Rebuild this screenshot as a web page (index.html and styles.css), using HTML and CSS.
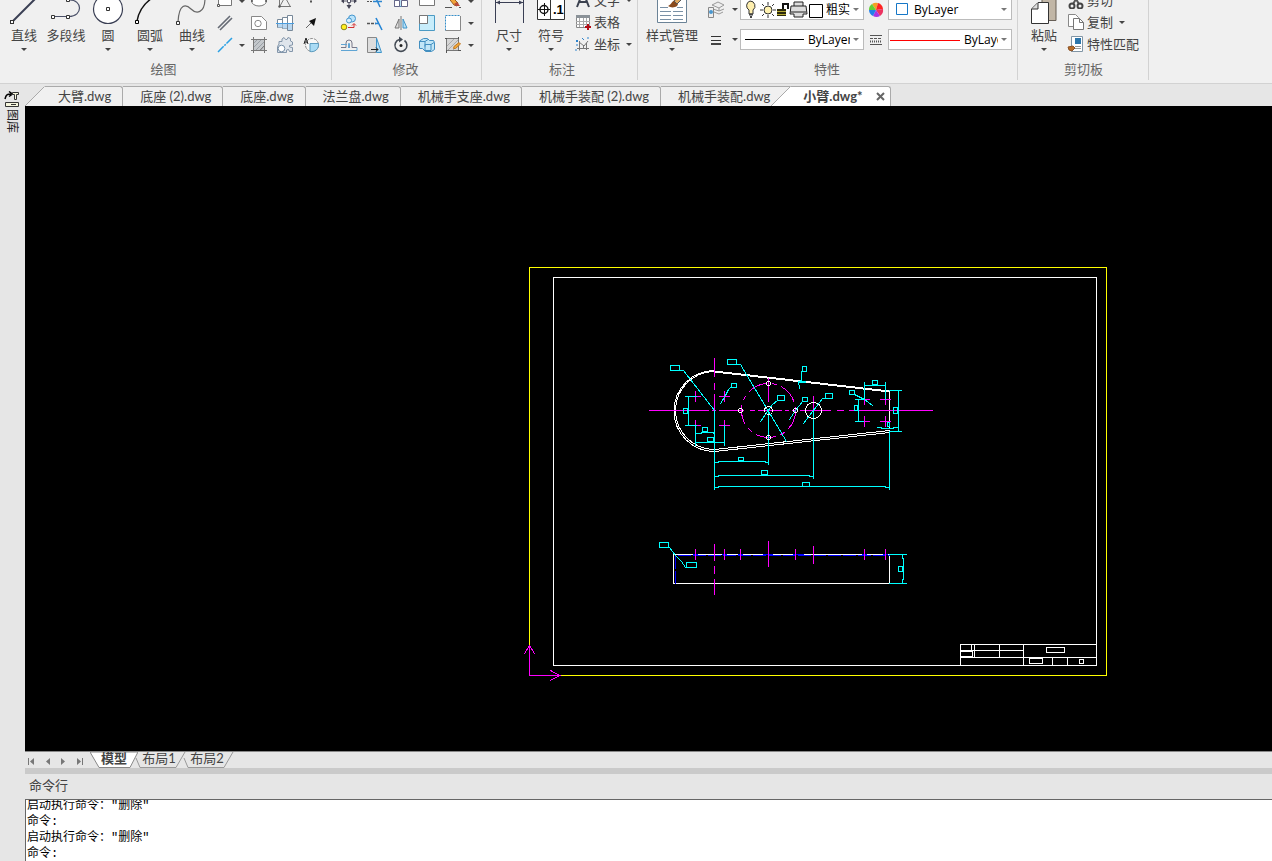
FILE: index.html
```html
<!DOCTYPE html>
<html lang="zh-CN">
<head>
<meta charset="utf-8">
<title>小臂.dwg</title>
<link rel="stylesheet" href="styles.css">
</head>
<body>
<header class="ribbon">
  <section class="panel draw-panel">
    <div class="panel-body">
      <button class="tool"><svg class="tool-icon" width="36" height="26"><path d="M6 22L29-1" stroke="#3a3f54" stroke-width="2"/><rect x="4.500" y="20.500" width="3" height="3" fill="#fff" stroke="#333"/></svg>直线<i class="caret"></i></button>
      <button class="tool"><svg class="tool-icon" width="36" height="26"><path d="M5 16.500h16c14 0 14-17 0-16.500" fill="none" stroke="#4a5068" stroke-width="1.200"/><g fill="#fff" stroke="#333"><path d="M3.500 15.500h3v3h-3zM18.500 15.500h3v3h-3zM18.500-1.500h3v3h-3z"/></g></svg>多段线</button>
      <button class="tool"><svg class="tool-icon" width="36" height="26"><circle cx="18" cy="9" r="14.500" fill="#fff" stroke="#3a3f54" stroke-width="1.200"/><path d="M16.500 7.500h3v3h-3z" fill="#fff" stroke="#333"/></svg>圆<i class="caret"></i></button>
      <button class="tool"><svg class="tool-icon" width="36" height="26"><path d="M5 21Q8 5 22-3" fill="none" stroke="#111" stroke-width="1.400"/><path d="M3.500 20.500h3v3h-3z" fill="#fff" stroke="#000"/></svg>圆弧<i class="caret"></i></button>
      <button class="tool"><svg class="tool-icon" width="36" height="26"><path d="M4 22C5 3 12 4 17 9S31 14 31-2" fill="none" stroke="#666" stroke-width="1.200"/><path d="M2.500 21.500h3v3h-3z" fill="#fff" stroke="#333"/></svg>曲线<i class="caret"></i></button>
      <div class="mini draw-mini">
        <button aria-label="矩形"><svg width="18" height="18"><path d="M2.500-2h13v15.500h-13z" fill="#fff" stroke="#777"/><path d="M1.500 12.500h2v2h-2z" fill="#fff" stroke="#555"/></svg></button><i class="caret"></i>
        <button aria-label="椭圆"><svg width="18" height="18"><ellipse cx="9" cy="9" rx="7.500" ry="5" fill="#fff" stroke="#777"/><circle cx="2" cy="9" r="1" fill="#555"/><circle cx="16" cy="9" r="1" fill="#555"/></svg></button>
        <button aria-label="折线"><svg width="18" height="18"><path d="M3.500 3v11.500H15M4 14L9 5l5 9" fill="none" stroke="#777"/><circle cx="3.500" cy="14.500" r="1.200" fill="#555"/></svg></button>
        <button aria-label="点"><svg width="18" height="18"><path d="M9 5v6M8 9.500h2" stroke="#555"/></svg></button>
        <button aria-label="平行线"><svg width="18" height="18"><path d="M2 14L14 2M4 16L16 4" stroke="#666b75" stroke-width="1.600"/></svg></button><i></i>
        <button aria-label="孔"><svg width="18" height="18"><path d="M1.500 2.500h10l5 5v8h-15z" fill="#fff" stroke="#888"/><circle cx="8" cy="9.500" r="3.200" fill="#fff" stroke="#888"/></svg></button>
        <button aria-label="轴"><svg width="18" height="18"><path d="M1.500 5.500h5v8h-5zM6.500 3.500h5v11h-5zM11.500 1.500h5v15h-5z" fill="#fff" stroke="#789"/><path d="M2 9.500h4.500v4H2zM7 9.500h4v5H7zM12 9.500h4v6.500h-4z" fill="#b8d7f1"/><path d="M0 9.500h18" stroke="#4a9ee0"/></svg></button>
        <button aria-label="箭头"><svg width="18" height="18"><path d="M4 14l5-5" stroke="#666"/><path d="M14 4l-2 8-5-5z" fill="#111"/></svg></button>
        <button aria-label="中心线"><svg width="18" height="18"><path d="M2 16L16 2" stroke="#2aa0e4" stroke-width="1.500" stroke-dasharray="8 1 2 1"/></svg></button><i class="caret"></i>
        <button aria-label="剖面线"><svg width="18" height="18"><path d="M3 3h12v12H3z" fill="#c4c8cc"/><path d="M3 12l9-9M3 8l5-5M5 15L15 5M9 15l6-6" stroke="#9aa0a6"/><path d="M3.500 1v16M1 3.500h16M1 14.500h16M14.500 1v16M10 14.500l4.500-5" stroke="#777" fill="none"/></svg></button>
        <button aria-label="齿轮"><svg width="18" height="18"><path d="M3 8V5.500h3V3L8 1.500l1.500 2H11L12 1.500l2.500 1v2.500l2 1v3l-3 .5v1.500l3 .5v4h-3l-1-2-2 .5V16.500H1.500v-6z" fill="#dfe5ec" stroke="#8496aa"/><circle cx="5.500" cy="12.500" r="3.300" fill="#fff" stroke="#7890a8"/></svg></button>
        <button aria-label="局部放大"><svg width="18" height="18"><circle cx="10" cy="9" r="6.500" fill="#f8f8f8" stroke="#888" stroke-dasharray="3 1"/><path d="M8 7.500h8.500a7 7 0 0 1-8.500 8z" fill="#a9dbf5" stroke="#5c9cc0"/><path d="M2 8l2-6 2 6M2.500 6h3" fill="none" stroke="#222"/></svg></button>
      </div>
    </div>
    <h2 class="panel-name">绘图</h2>
  </section>

  <section class="panel modify-panel">
    <div class="panel-body">
      <div class="mini modify-mini">
        <button aria-label="移动"><svg width="18" height="18"><path d="M9 3v12M3 9h12" stroke="#556"/><path d="M9 17l-2.500-4h5zM1 9l3-2.500v5zM17 9l-3-2.500v5z" fill="#445"/><path d="M7.500 7.500h3v3h-3z" fill="#fff" stroke="#556"/></svg></button>
        <button aria-label="修剪"><svg width="18" height="18"><path d="M1 9.500h8" stroke="#555" stroke-dasharray="2 1"/><path d="M7 9.500h9M9 4l5 11" stroke="#2d86d0" stroke-width="1.500"/></svg></button>
        <button aria-label="阵列"><svg width="18" height="18"><path d="M2.500 1.500h12v13h-12z" fill="#bde2f6" stroke="#4b93bd"/><path d="M9.500 8.500h6v6h-6zM2.500 8.500h5v6h-5z" fill="#fff" stroke="#668"/></svg></button>
        <button aria-label="拉伸"><svg width="18" height="18"><path d="M1.500-2h15v15.500h-15z" fill="#fff" stroke="#777"/></svg></button>
        <button aria-label="删除"><svg width="18" height="18"><path d="M3 4l2-2 9 9-1 3-3-1z" fill="#f2a53a" stroke="#986021"/><path d="M10 12l3-2 3 4h-4z" fill="#b94b3e"/><path d="M1 15.500h7M15 15.500h2" stroke="#555"/></svg></button><i class="caret"></i>
        <button aria-label="复制对象"><svg width="18" height="18"><circle cx="12" cy="4.500" r="3.500" fill="#bce4fa" stroke="#4496cf"/><circle cx="9" cy="6.500" r="2.500" fill="#d9effb" stroke="#4496cf"/><circle cx="4" cy="13" r="2.800" fill="#ffee20" stroke="#8a8520"/><path d="M8 13.500h6V10M12 11.500l2-2 2 2" fill="none" stroke="#d33232"/></svg></button>
        <button aria-label="延伸"><svg width="18" height="18"><path d="M1 9.500h9" stroke="#555" stroke-width="1.400" stroke-dasharray="3 1"/><path d="M9 9.500h4M10 4l6 12" stroke="#2585d4" stroke-width="1.600"/></svg></button>
        <button aria-label="镜像"><svg width="18" height="18"><path d="M7 5v9H3z" fill="#ddd" stroke="#777"/><path d="M11 5v9h4z" fill="#b8e0f7" stroke="#3f94c9"/><path d="M9 2v14" stroke="#777"/></svg></button>
        <button aria-label="缩放"><svg width="18" height="18"><path d="M1.500 1.500h15v15h-15z" fill="#c8edfb" stroke="#4b9ac4"/><path d="M1.500 1.500h8v8h-8z" fill="#fff" stroke="#777"/></svg></button>
        <button aria-label="框选"><svg width="18" height="18"><path d="M2 2h14v14H2z" fill="#fff"/><path d="M1.500 16.500v-15h15" fill="none" stroke="#348fcb" stroke-dasharray="2 1"/><path d="M16.500 2v14.500h-15" fill="none" stroke="#888"/></svg></button><i class="caret"></i>
        <button aria-label="偏移"><svg width="18" height="18"><path d="M1 11.500h5V7a3 3 0 0 1 6 0v4.500h5" fill="none" stroke="#778"/><path d="M1 14.500h16v-3M1 8.500h6" fill="none" stroke="#60a5d4"/><path d="M8.500 12V7.500h1V12" fill="none" stroke="#60a5d4"/></svg></button>
        <button aria-label="斜切"><svg width="18" height="18"><path d="M1.500 1.500h9v15h-9z" fill="#ddd" stroke="#888"/><path d="M10.500 2l5 14.500h-5z" fill="#b8e0f7" stroke="#3f94c9"/><path d="M5 13.500h7M10 11.500l2 2-2 2" fill="none" stroke="#222"/></svg></button>
        <button aria-label="旋转"><svg width="18" height="18"><path d="M12.500 4.500a6 6 0 1 1-5-1" fill="none" stroke="#444b55" stroke-width="1.600"/><path d="M7 .5l4 3-4 3z" fill="#444b55"/><circle cx="9" cy="9.500" r="1.500" fill="#222"/></svg></button>
        <button aria-label="块编辑"><svg width="18" height="18"><path d="M1.500 5l4-2.500h4l2 2h4l1 2v7l-3 2h-6l-3-3h-3z" fill="#c1e6f7" stroke="#438fc0"/><path d="M2 5.500h5v5M7 8.500h6v6H7zM13 8.500l3-2M7 5.500l3-2" fill="none" stroke="#438fc0"/></svg></button>
        <button aria-label="编辑填充"><svg width="18" height="18"><path d="M2.500 2.500h12v12h-12z" fill="#d6d6d6" stroke="#777"/><path d="M3 10l7-7M4 14L14 4M9 14l5-5" stroke="#aaa"/><path d="M1 2.500h2M14 14.500h3M2.500 14v3M14.500 1v2" stroke="#555"/><path d="M9.500 12.500l.5-2 5-4 1.500 1.500-5 4.500z" fill="#f1a638" stroke="#c07a28"/></svg></button><i class="caret"></i>
      </div>
    </div>
    <h2 class="panel-name">修改</h2>
  </section>

  <section class="panel annotate-panel">
    <div class="panel-body">
      <button class="tool"><svg class="tool-icon" width="36" height="26"><path d="M4.500-2v25M32.500-2v25M5 2.500h27" stroke="#3a3f54"/><path d="M5 2.500L9 .5v4zM32 2.500L28 .5v4z" fill="#3a3f54"/></svg>尺寸<i class="caret"></i></button>
      <button class="tool"><svg class="tool-icon" width="36" height="26"><path d="M4.500-2h27v21.500h-27zM17.500-2v21" fill="#fff" stroke="#333"/><circle cx="11" cy="9.500" r="4" fill="none" stroke="#111" stroke-width="1.400"/><path d="M5 9.500h12M11.500 3v13" stroke="#111"/><text class="symbol-text" x="20" y="14">.1</text></svg>符号<i class="caret"></i></button>
      <div class="text-tools">
        <button><svg width="18" height="18"><path d="M3 16L8.500 2h1L15 16M5 11h8" fill="none" stroke="#3c4250" stroke-width="2"/></svg>文字<i class="caret"></i></button>
        <button><svg width="18" height="18"><path d="M2.500 2.500h13v12h-13z" fill="#fff" stroke="#888"/><path d="M2 2h14v3H2z" fill="#8b9298"/><path d="M2 8.500h14M2 11.500h14M5.500 5v9M9.500 5v9M12.500 5v9" stroke="#aaa"/><path d="M11 14h6M14 11v6" stroke="#b40d16" stroke-width="2"/></svg>表格</button>
        <button><svg width="18" height="18"><path d="M5.500 6v9.500M3 13.500h12M5 7l5 4 4-5M9.500 10v4M12.500 8v7" fill="none" stroke="#777"/><path d="M2 5l2 2M4 5l-2 2M3 9v2M2 16v-2M8 3l2 2M14 2v2" stroke="#2d83cd"/></svg>坐标<i class="caret"></i></button>
      </div>
    </div>
    <h2 class="panel-name">标注</h2>
  </section>

  <section class="panel">
    <div class="panel-body">
      <button class="tool tool-wide"><svg class="tool-icon" width="36" height="26"><path d="M3.500-2h29v24.500h-29z" fill="#fff" stroke="#6b8397"/><path d="M6 7.500h8M6 11.500h11M19 11.500h10M6 15.500h11M19 15.500h10M6 19.500h11M19 19.500h10M23 7.500h6" stroke="#7990a5"/><path d="M14 6c3-1 4-5 7-6 4 1 4 6 0 7-3 1-5 0-7-1z" fill="#8a4a1c"/><path d="M20 1L26-4l3 2-6 6z" fill="#dfa75e" stroke="#555"/></svg>样式管理<i class="caret"></i></button>
      <div class="properties">
        <button aria-label="图层"><svg width="18" height="18"><path d="M5 4l6-3 6 3-5 3zM6 8l6 2 5-2M7 11l5 2 4-2M12 7v3" fill="#eee" stroke="#999"/><path d="M1.500 6.500h5v10h-5z" fill="#eee" stroke="#888"/><circle cx="4" cy="11" r="2" fill="#4a97cf"/></svg></button><i class="caret"></i>
        <div class="combo">
          <svg class="layer-state" width="68" height="20"><path d="M9 1a5 5 0 0 1 3 9v4H8v-4a5 5 0 0 1 1-9z" fill="#ffefae" stroke="#333"/><path d="M8 14.500h4M9 17h2" stroke="#444" stroke-width="2"/><circle cx="27" cy="10" r="4" fill="#fff2b1" stroke="#333"/><path d="M27 2v3M27 15v3M19 10h3M32 10h3M21 4l2 2M31 14l2 2M33 4l-2 2M23 14l-2 2" stroke="#333"/><path d="M36 9h9v7h-9z" fill="#2c2a0b"/><path d="M36 11.500h9M36 14.500h9" stroke="#b5a934"/><path d="M42 9V4h5v5" fill="none" stroke="#111" stroke-width="2"/><path d="M53 6V2h9v4h3l1 8h-4v3h-9v-3h-4l1-8z" fill="#ddd" stroke="#222"/><path d="M53 6h9M50 12h15" stroke="#222"/></svg>
          <svg class="swatch" width="17" height="20"><path d="M.5 4.500h13v13H.5z" fill="#fff" stroke="#000"/></svg>
          <select aria-label="图层选择"><option>粗实线</option></select><i class="caret"></i>
        </div>
        <svg width="18" height="18"><circle cx="9" cy="9" r="7" fill="#eee"/><path d="M9 9L5 3A7 7 0 0 1 11 2z" fill="#f4a124"/><path d="M9 9l2-7a7 7 0 0 1 5 6z" fill="#ff2320"/><path d="M9 9l7-1a7 7 0 0 1-3 7z" fill="#ec3260"/><path d="M9 9l4 6a7 7 0 0 1-7 0z" fill="#a835e2"/><path d="M9 9l-3 6a7 7 0 0 1-4-6z" fill="#2180ea"/><path d="M9 9H2a7 7 0 0 1 3-6z" fill="#63cf35"/></svg>
        <div class="combo"><svg width="25" height="20"><path d="M7.500 3.500h11v11h-11z" fill="#fff" stroke="#1677c7"/></svg><select aria-label="颜色"><option>ByLayer</option></select><i class="caret"></i></div>
        <button aria-label="线宽"><svg width="18" height="18"><path d="M4 5.500h10M4 9.500h10" stroke="#333"/><path d="M4 13h10" stroke="#444" stroke-width="2"/></svg></button><i class="caret"></i>
        <div class="combo"><svg width="67" height="20"><path d="M4 9.500h59" stroke="#000"/></svg><select aria-label="线型"><option>ByLayer</option></select><i class="caret"></i></div>
        <svg width="18" height="18"><path d="M3 4.500h12M3 13.500h12" stroke="#555"/><path d="M3 7.500h12" stroke="#555" stroke-dasharray="3 1"/><path d="M3 10.500h12" stroke="#555" stroke-width="2" stroke-dasharray="1 1"/></svg>
        <div class="combo"><svg width="75" height="20"><path d="M1 10.500h70" stroke="red"/></svg><select aria-label="线条"><option>ByLayer</option></select><i class="caret"></i></div>
      </div>
    </div>
    <h2 class="panel-name">特性</h2>
  </section>

  <section class="panel clipboard-panel">
    <div class="panel-body">
      <button class="tool"><svg class="tool-icon" width="36" height="26"><path d="M16-2h14v22.500H16z" fill="#c1b6a6" stroke="#665e55"/><path d="M5.500 9L12 2.500h10.500v21h-17z" fill="#fff" stroke="#333"/><path d="M6 9h6V3" fill="#ddd" stroke="#333"/></svg>粘贴<i class="caret"></i></button>
      <div class="text-tools clipboard-tools">
        <button><svg width="18" height="18"><path d="M4 0l8 13M14 0L6 13" stroke="#555" stroke-width="2"/><circle cx="5" cy="15" r="2.500" fill="none" stroke="#444" stroke-width="2"/><circle cx="13" cy="15" r="2.500" fill="none" stroke="#444" stroke-width="2"/></svg>剪切</button>
        <button><svg width="18" height="18"><path d="M1.500 1.500h7l3 3v9h-10z" fill="#fff" stroke="#888"/><path d="M6.500 5.500h6l4 4v7h-10z" fill="#fff" stroke="#777"/><path d="M12.500 5.500v4h4" fill="none" stroke="#777"/></svg>复制<i class="caret"></i></button>
        <button><svg width="18" height="18"><path d="M4.500 1.500h11v15h-11z" fill="#fff" stroke="#8095a5"/><path d="M8 3h6v6H8z" fill="#2d76ab"/><path d="M8 11.500h6M8 13.500h6" stroke="#999"/><path d="M1 12l5-1 2 2-3 3-3-1z" fill="#b86b25" stroke="#8c5428"/></svg>特性匹配</button>
      </div>
    </div>
    <h2 class="panel-name">剪切板</h2>
  </section>
</header>

<div class="workspace">
  <aside class="side">
    <button><svg width="18" height="18"><path d="M1 9c1-5 3-5 6-5M5 1.500L8.500 4 5 6.500" fill="none" stroke="#000" stroke-width="1.500"/><path d="M8.500 2.500h6v2h-2v5h-2v-5h-2zM1.500 12.500h13v4h-13zM7 14.500h5" fill="#f5f5dc" stroke="#333"/></svg><span>图库</span></button>
  </aside>
  <main class="main">
    <nav class="files">
      <svg class="slope" width="20" height="20"><path d="M0 20L19.500.5H20V20z" fill="#f0f0f0"/><path d="M0 20L19.500.5" stroke="#aaa"/></svg>
      <button class="file first">大臂.dwg</button><button class="file">底座 (2).dwg</button><button class="file">底座.dwg</button><button class="file">法兰盘.dwg</button><button class="file">机械手支座.dwg</button><button class="file">机械手装配 (2).dwg</button><button class="file last">机械手装配.dwg</button>
      <svg class="slope" width="20" height="20"><path d="M0 0h20L0 20z" fill="#f0f0f0"/><path d="M0 20L19.500.5H20V20z" fill="#fff"/><path d="M0 20L19.500.5H0" fill="none" stroke="#aaa"/></svg>
      <button class="file active">小臂.dwg*<svg width="9" height="9"><path d="M1 1l7 7M8 1L1 8" stroke="#666" stroke-width="2"/></svg></button>
    </nav>

    <div class="canvas">
      <svg viewBox="25 106 1247 645" preserveAspectRatio="xMinYMin meet" shape-rendering="crispEdges">
        <g transform="translate(.5 .5)" fill="none" stroke-width="1" stroke-linecap="square">
          <path class="yellow" d="M529 267H1106V675H529z"/>
          <path class="white" d="M553 277H1096V665H553z"/>
          <path class="magenta" d="M529 645V675H559M524 653L529 645L534 653M550 670L559 675L550 680"/>
          <!-- title block -->
          <path class="white" d="M960 665V644H1096M960 650H1023M960 657H1096M971 644V650M974 644V657M999 644V657M1023 644V665M1052 657V665M1067 657V665M960 651H972V656H960zM1046 647H1064V652H1046zM1029 658H1042V663H1029zM1079 659H1083V663H1079z"/>
          <!-- arm, top view -->
          <path class="white" d="M714 370A40 40 0 0 0 714 451L889 432M714 371A39 39 0 0 0 714 449L889 430M889 391V427"/>
          <path class="white" stroke-width="2" d="M714 371L889 391"/>
          <path class="magenta" d="M649 410H708M712 410H715M719 410H743M750 410H754M758 410H781M785 410H788M792 410H794M800 410H830M837 410H843M849 410H932M714 358V376M714 383V389M714 394V409M768 378V401M813 396V410"/>
          <path class="magenta" d="M690 396H700M695 391V401M719 396H729M724 391V401M690 425H700M695 420V430M719 425H729M724 420V430M859 399H869M864 394V404M880 399H890M885 394V404M859 421H869M864 416V426M880 421H890M885 416V426"/>
          <circle class="magenta" cx="768" cy="410" r="27" stroke-linecap="butt" stroke-dasharray="20 5 5 5"/>
          <g class="cyan">
            <path d="M670 365H679V370H670zM680 370H683L714 410V489M727 359H736V364H727zM737 364H740L786 441M731 383H736V387H731zM731 386L728 389L725 395L720 403M777 395H784V400H777zM777 400L772 404L760 421"/>
            <path d="M683 408H687V413H683zM685 396H696M685 425H696M688 396V425M695 425V445M724 425V445M695 433H700L702 432H712L714 433M702 427H707V431H702zM695 442H724M707 437H713V441H707z"/>
            <path d="M768 410V464M714 462H718V461H765V462H768M738 457H743V460H738zM813 410V478M714 476H718V475H809V476H813M761 470H767V474H761zM889 432V489M714 487H718V486H885V487H889M802 482H809V486H802z"/>
            <path d="M802 366H806V371H802zM801 371V380L798 381L799 388M802 397H807V401H802zM802 401L795 410L789 419M825 393H832V398H825zM825 398H822L803 423"/>
            <path d="M864 399V382M885 399V382M864 385H885M872 380H877V384H872zM849 390H854V394H849zM854 394L864 399L872 405M855 399H863M855 421H863M858 399V421M854 405H857V410H854zM889 390H901M889 431H901M898 390V431M893 407H897V413H893zM887 422H889V426H887zM877 427H881V428H893V427H898"/>
            <path stroke-width="2" d="M798 381H804"/>
          </g>
          <g class="white"><circle cx="740" cy="410" r="2"/><circle cx="768" cy="383" r="2"/><circle cx="768" cy="437" r="2"/><circle cx="795" cy="410" r="2"/><circle cx="768" cy="410" r="4"/><circle cx="813" cy="410" r="8"/></g>
          <!-- arm, side view -->
          <path class="white" d="M673 554H889V583H673z"/>
          <path class="blue" stroke-linecap="butt" stroke-dasharray="13 2" d="M675 583V555H889"/>
          <path class="blue" d="M693 554H697M722 554H726M738 554H742M763 554H772M793 554H803M862 554H866M883 554H887"/>
          <path class="magenta" d="M695 549V559M714 544V560M714 566V573M714 579V594M724 549V559M740 549V559M768 541V566M795 549V559M813 546V563M864 549V559M885 549V559"/>
          <path class="cyan" d="M659 542H668V547H659zM669 547L675 555L681 561L685 567H686M686 562H696V567H686zM889 554H906M889 583H906M902 554V558H903V579H902V583M898 566H902V571H898z"/>
        </g>
      </svg>
    </div>

    <nav class="layouts">
      <div class="pager">
        <button aria-label="第一个"><svg width="9" height="9"><path d="M1.500 1v7" stroke="#777"/><path d="M7 1v7L3 4.500z" fill="#777"/></svg></button>
        <button aria-label="上一个"><svg width="9" height="9"><path d="M7 1v7L3 4.500z" fill="#777"/></svg></button>
        <button aria-label="下一个"><svg width="9" height="9"><path d="M2 1v7l4-3.500z" fill="#777"/></svg></button>
        <button aria-label="最后一个"><svg width="9" height="9"><path d="M7.500 1v7" stroke="#777"/><path d="M2 1v7l4-3.500z" fill="#777"/></svg></button>
      </div>
      <button class="layout current"><svg width="48" height="17"><path d="M0 0l9 15.500h31L48 0z" fill="#fff" stroke="#888"/></svg><span>模型</span></button>
      <button class="layout"><svg width="54" height="17"><path d="M4 6l4 9.500h36L53 0" fill="none" stroke="#999"/></svg><span>布局1</span></button>
      <button class="layout"><svg width="54" height="17"><path d="M4 6l4 9.500h36L53 0" fill="none" stroke="#999"/></svg><span>布局2</span></button>
    </nav>
    <div class="splitter"></div>
    <section class="command">
      <h2 class="command-title">命令行</h2>
      <div class="log">
        <p>启动执行命令："删除"</p>
        <p>命令:</p>
        <p>启动执行命令："删除"</p>
        <p class="prompt"><label for="cmd">命令:</label><input id="cmd" type="text"></p>
      </div>
    </section>
  </main>
</div>
</body>
</html>
```
FILE: styles.css
```css
* { box-sizing: border-box; }
body {
  margin: 0;
  height: 100vh;
  display: flex;
  flex-direction: column;
  overflow: hidden;
  background: #e6e6e6;
  color: #444;
  font: 13px/18px Lato, "Noto Sans CJK SC", sans-serif;
}
button {
  border: 0;
  padding: 0;
  background: none;
  color: inherit;
  font: inherit;
  white-space: nowrap;
}
h2, p { margin: 0; font-weight: normal; }
h2 { font-size: 13px; }
svg { display: block; flex: none; }

.caret {
  width: 0;
  height: 0;
  border: solid transparent;
  border-width: 3px 3px 0;
  border-top-color: #444;
  place-self: center;
}

/* ribbon */
.ribbon {
  display: flex;
  flex: none;
  height: 84px;
  background: #f0f0f0;
  border-bottom: 1px solid #d2d2d2;
  overflow: hidden;
}
.panel {
  display: flex;
  flex-direction: column;
  flex: none;
  padding: 0 5px 0 4px;
  height: 80px;
  border-right: 1px solid #d2d2d2;
}
.draw-panel { padding: 0 7px 0 3px; }
.modify-panel { padding: 0 6px 0 4px; }
.annotate-panel { padding: 0 1px 0 6px; }
.clipboard-panel { padding: 0 4px 0 5px; }
.panel-body { display: flex; height: 60px; }
.panel-name { text-align: center; color: #666; }
.tool {
  width: 42px;
  display: flex;
  flex-direction: column;
  align-items: center;
}
.tool .caret { margin-top: 4px; }
.tool-wide { width: 60px; }
.symbol-text { font: bold 13px "Liberation Sans", sans-serif; fill: #000; }
.mini {
  display: grid;
  grid-auto-rows: 22px;
  margin-top: -10px;
}
.mini button { display: grid; place-items: center; }
.draw-mini { grid-template-columns: 24px 9px 26px 26px 26px; }
.modify-mini { grid-template-columns: repeat(5, 26px) 9px; }
.text-tools {
  display: grid;
  grid-auto-rows: 22px;
  margin-top: -11px;
  padding-left: 2px;
  width: 64px;
}
.text-tools button { display: flex; align-items: center; gap: 2px; }
.text-tools .caret { margin-left: 4px; }
.clipboard-tools { width: 79px; }
.properties {
  display: grid;
  grid-template-columns: 28px 10px 124px 24px 124px;
  grid-template-rows: 21px 21px;
  row-gap: 9px;
  margin-top: -1px;
  place-items: center;
}
.combo {
  display: flex;
  align-items: center;
  width: 100%;
  height: 21px;
  padding-right: 4px;
  background: #fff;
  border: 1px solid #bbb;
  overflow: hidden;
}
.combo select {
  appearance: none;
  flex: 1;
  width: 0;
  min-width: 0;
  height: 19px;
  margin-right: 3px;
  padding: 0;
  border: 0;
  background: none;
  color: #000;
  font: 12px/18px "Open Sans", "Noto Sans CJK SC", sans-serif;
}
.combo .caret { border-top-color: #777; flex: none; }

/* workspace */
.workspace { display: flex; flex: 1; min-height: 0; }
.side { width: 25px; flex: none; padding: 6px 0 0 4px; }
.side button { display: flex; flex-direction: column; align-items: flex-start; gap: 1px; color: #222; }
.side span {
  writing-mode: vertical-rl;
  text-orientation: sideways;
  font-size: 12px;
  line-height: 16px;
}
.main { flex: 1; min-width: 0; display: flex; flex-direction: column; }
.files { display: flex; align-items: flex-end; height: 22px; flex: none; overflow: hidden; }
.file {
  height: 20px;
  padding: 0 11px 1px 17px;
  background: #f0f0f0;
  border: 1px solid #aaa;
  border-width: 1px 1px 0 0;
  border-radius: 0 3px 0 0;
  line-height: 16px;
}
.file.first { padding-left: 13px; }
.file.last { border-right: 0; border-radius: 0; padding-right: 1px; }
.file.active {
  display: flex;
  align-items: center;
  gap: 13px;
  padding: 0 5px 1px 12px;
  background: #fff;
  font-weight: bold;
}

/* drawing */
.canvas { flex: 1; min-height: 0; background: #000; }
.canvas svg { width: 100%; height: 100%; }
.yellow { stroke: #ff0; }
.white { stroke: #fff; }
.magenta { stroke: #f0f; }
.cyan { stroke: #0ff; }
.blue { stroke: #00f; }

/* layout tabs */
.layouts { display: flex; height: 17px; flex: none; border-top: 1px solid #888; }
.pager { display: flex; align-items: center; gap: 7px; width: 65px; padding: 2px 0 0 2px; }
.layout { display: grid; place-items: center; margin-right: -6px; height: 17px; }
.layout > * { grid-area: 1 / 1; }
.layout span { line-height: 13px; height: 17px; }
.current { font-weight: bold; }
.splitter { height: 6px; flex: none; background: #cacaca; }

/* command line */
.command { flex: none; }
.command-title { height: 25px; padding-left: 4px; line-height: 22px; }
.log {
  display: flex;
  flex-direction: column;
  justify-content: flex-end;
  height: 62px;
  overflow: hidden;
  padding-left: 1px;
  background: #fff;
  border: 1px solid #666;
  border-width: 1px 0 0 1px;
  color: #000;
  font: 12px/18px "Liberation Mono", "Noto Sans CJK SC", monospace;
}
.log p { flex: none; height: 16px; }
.prompt { display: flex; }
.prompt input {
  flex: 1;
  min-width: 0;
  height: 16px;
  border: 0;
  padding: 0;
  outline: 0;
  background: none;
  font: inherit;
}
```
